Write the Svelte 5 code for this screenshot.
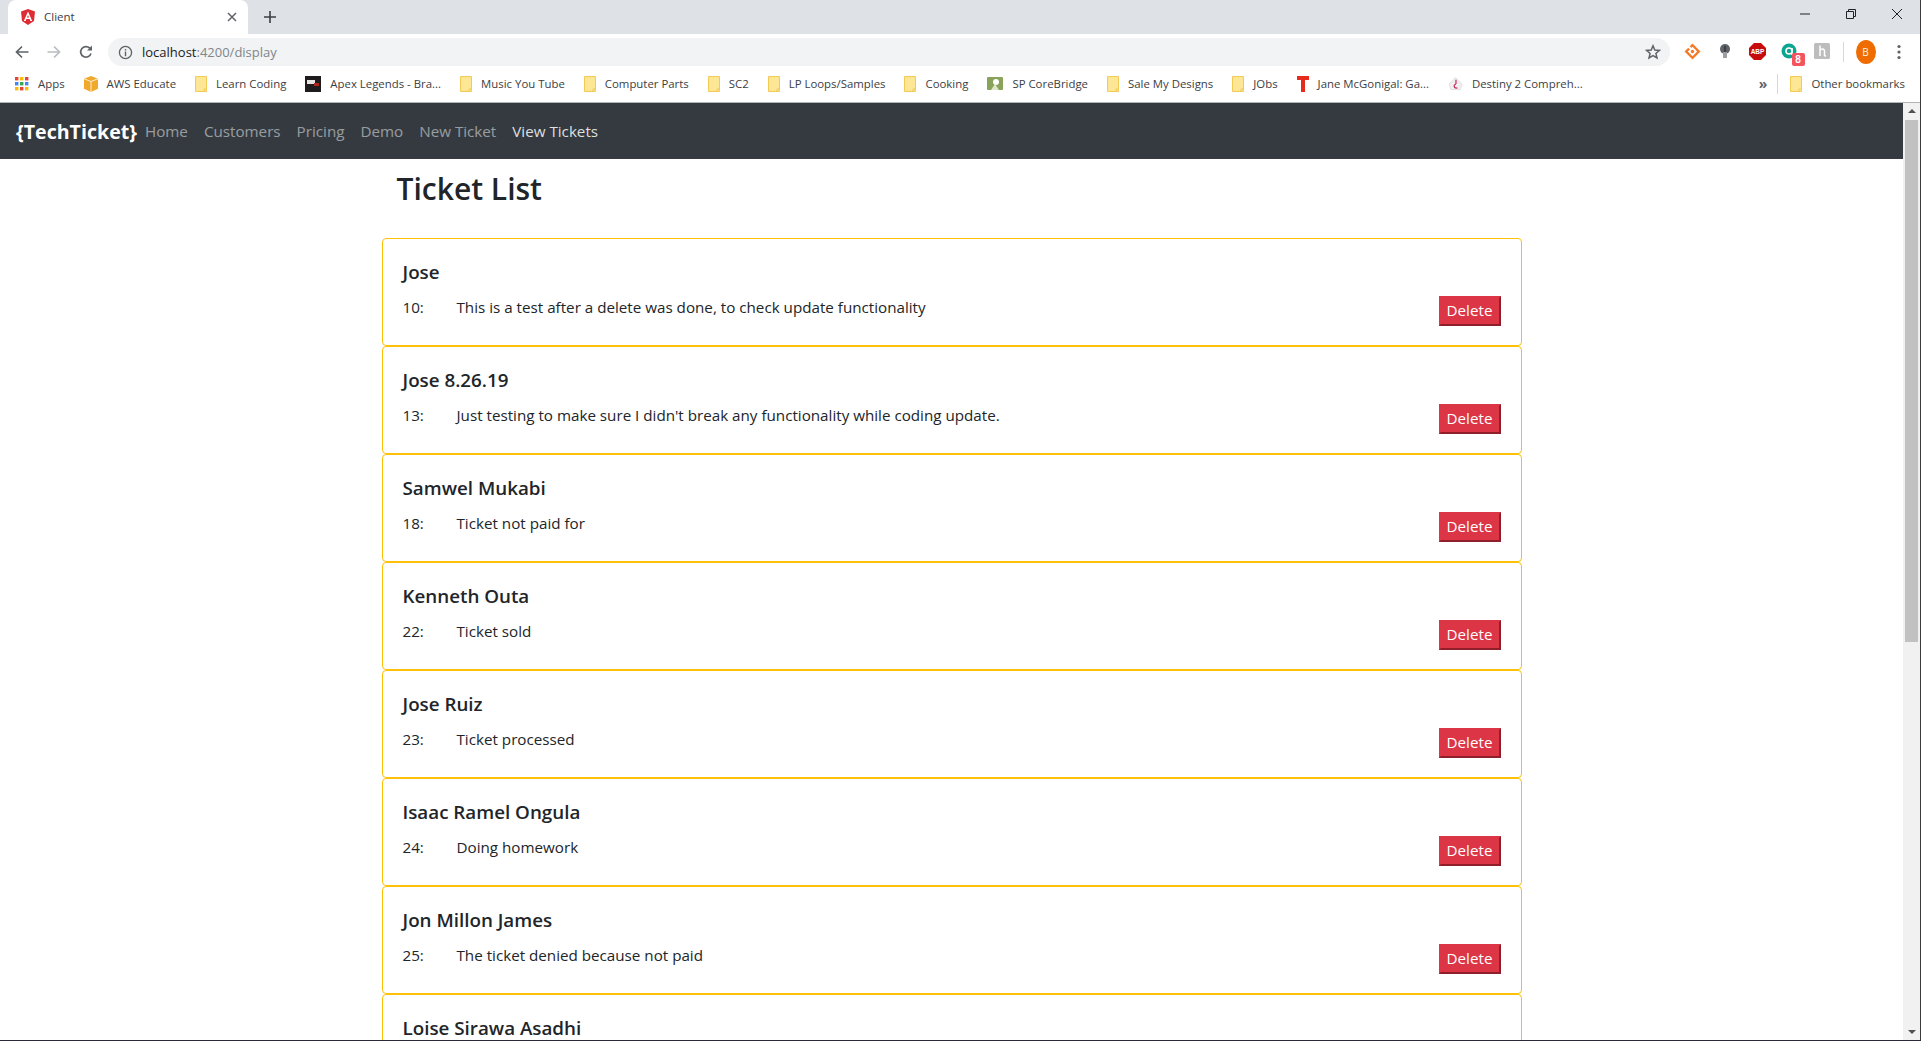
<script>
  const bookmarks = [
    { label: "Apps", icon: "apps" },
    { label: "AWS Educate", icon: "aws" },
    { label: "Learn Coding", icon: "folder" },
    { label: "Apex Legends - Bra...", icon: "apex" },
    { label: "Music You Tube", icon: "folder" },
    { label: "Computer Parts", icon: "folder" },
    { label: "SC2", icon: "folder" },
    { label: "LP Loops/Samples", icon: "folder" },
    { label: "Cooking", icon: "folder" },
    { label: "SP CoreBridge", icon: "sp" },
    { label: "Sale My Designs", icon: "folder" },
    { label: "JObs", icon: "folder" },
    { label: "Jane McGonigal: Ga...", icon: "tee" },
    { label: "Destiny 2 Compreh...", icon: "destiny" },
  ];

  const links = ["Home", "Customers", "Pricing", "Demo", "New Ticket"];

  const tickets = [
    { name: "Jose", id: 10, text: "This is a test after a delete was done, to check update functionality" },
    { name: "Jose 8.26.19", id: 13, text: "Just testing to make sure I didn't break any functionality while coding update." },
    { name: "Samwel Mukabi", id: 18, text: "Ticket not paid for" },
    { name: "Kenneth Outa", id: 22, text: "Ticket sold" },
    { name: "Jose Ruiz", id: 23, text: "Ticket processed" },
    { name: "Isaac Ramel Ongula", id: 24, text: "Doing homework" },
    { name: "Jon Millon James", id: 25, text: "The ticket denied because not paid" },
    { name: "Loise Sirawa Asadhi" },
  ];
</script>

<div class="window">
  <div class="tabstrip">
    <div class="tab">
      <svg class="favicon" viewBox="0 0 16 16" width="16" height="16">
        <path d="M8 0 L15 2.5 L14 12 L8 16 L2 12 L1 2.5 Z" fill="#dd2c35" />
        <path d="M8 2.5 L3.8 12 H5.6 L6.4 10 H9.6 L10.4 12 H12.2 Z M8 6 L9 8.6 H7 Z" fill="#fff" fill-rule="evenodd" />
      </svg>
      <span class="tab-title">Client</span>
      <svg class="tab-close" viewBox="0 0 10 10" width="10" height="10">
        <path d="M1 1 L9 9 M9 1 L1 9" stroke="#5f6368" stroke-width="1.5" />
      </svg>
    </div>
    <svg class="new-tab" viewBox="0 0 12 12" width="12" height="12">
      <path d="M6 0 V12 M0 6 H12" stroke="#3c4043" stroke-width="1.6" />
    </svg>
    <div class="win-controls">
      <svg viewBox="0 0 10 10" width="10" height="10"><path d="M0 5 H10" stroke="#222" /></svg>
      <svg viewBox="0 0 10 10" width="10" height="10"><path d="M.5 2.5 H7.5 V9.5 H.5 Z M2.5 2.5 V.5 H9.5 V7.5 H7.5" fill="none" stroke="#222" /></svg>
      <svg viewBox="0 0 10 10" width="10" height="10"><path d="M0 0 L10 10 M10 0 L0 10" stroke="#222" /></svg>
    </div>
  </div>

  <div class="toolbar">
    <button class="tool" aria-label="Back">
      <svg viewBox="0 0 16 16" width="16" height="16"><path d="M14.5 8 H2.5 M8 2.5 L2.5 8 L8 13.5" fill="none" stroke="#5f6368" stroke-width="1.7" /></svg>
    </button>
    <button class="tool" aria-label="Forward">
      <svg viewBox="0 0 16 16" width="16" height="16"><path d="M1.5 8 H13.5 M8 2.5 L13.5 8 L8 13.5" fill="none" stroke="#b9bcc0" stroke-width="1.7" /></svg>
    </button>
    <button class="tool" aria-label="Reload">
      <svg viewBox="0 0 16 16" width="16" height="16">
        <path d="M13 9.5 A5.3 5.3 0 1 1 11.8 4.2" fill="none" stroke="#5f6368" stroke-width="1.7" />
        <path d="M14 1.5 V6.5 H9 Z" fill="#5f6368" />
      </svg>
    </button>
    <div class="omnibox">
      <svg viewBox="0 0 16 16" width="15" height="15">
        <circle cx="8" cy="8" r="6.5" fill="none" stroke="#5f6368" stroke-width="1.4" />
        <path d="M8 7 V12 M8 4.2 V5.8" stroke="#5f6368" stroke-width="1.5" />
      </svg>
      <span class="url"><span class="host">localhost</span>:4200/display</span>
      <svg class="star" viewBox="0 0 16 16" width="16" height="16">
        <path d="M8 1.8 L9.8 6 L14.4 6.4 L10.9 9.4 L12 13.9 L8 11.5 L4 13.9 L5.1 9.4 L1.6 6.4 L6.2 6 Z" fill="none" stroke="#5f6368" stroke-width="1.5" />
      </svg>
    </div>
    <div class="extensions">
      <span class="ext">
        <svg viewBox="0 0 16 16" width="17" height="17">
          <path d="M8 .5 L15.5 8 L8 15.5 L.5 8 L4 4.5 L5.6 6 L3.6 8 L8 12.4 L12.4 8 L8 3.6 L6.9 4.7 L5.4 3.1 Z" fill="#f47a27" />
          <circle cx="8" cy="8" r="1.6" fill="#f47a27" />
        </svg>
      </span>
      <span class="ext">
        <svg viewBox="0 0 16 16" width="16" height="16">
          <circle cx="8" cy="6" r="5" fill="#5f6368" />
          <path d="M6 9 H10 V15 H6 Z" fill="#9b9ea2" />
          <path d="M7.3 3 H8.7 V9 H7.3 Z" fill="#2f3235" />
        </svg>
      </span>
      <span class="ext">
        <svg viewBox="0 0 17 17" width="17" height="17">
          <path d="M5 0 H12 L17 5 V12 L12 17 H5 L0 12 V5 Z" fill="#c70d0c" />
          <text x="8.5" y="11.3" class="abp">ABP</text>
        </svg>
      </span>
      <span class="ext">
        <svg viewBox="0 0 18 18" width="18" height="18">
          <circle cx="8" cy="8" r="7.5" fill="#0aa68f" />
          <circle cx="8" cy="8" r="3" fill="none" stroke="#fff" stroke-width="1.6" />
          <path d="M11 5 V12" stroke="#fff" stroke-width="1.6" />
        </svg>
        <span class="badge">8</span>
      </span>
      <span class="ext">
        <svg viewBox="0 0 16 16" width="16" height="16">
          <rect width="16" height="16" rx="1.5" fill="#bdbdbd" />
          <path d="M6 2.5 V13 M6 7.5 C8 5 10.5 6 10.5 8 V13 M10.5 13 H12" fill="none" stroke="#fff" stroke-width="1.5" />
        </svg>
      </span>
    </div>
    <span class="tool-sep"></span>
    <span class="avatar">B</span>
    <svg class="menu" viewBox="0 0 4 16" width="4" height="16">
      <circle cx="2" cy="2.5" r="1.6" fill="#5f6368" />
      <circle cx="2" cy="8" r="1.6" fill="#5f6368" />
      <circle cx="2" cy="13.5" r="1.6" fill="#5f6368" />
    </svg>
  </div>

  <div class="bookmarks">
    {#each bookmarks as b}
      <span class="bookmark">
        {#if b.icon === "apps"}
          <svg viewBox="0 0 14 14" width="14" height="14">
            {#each [0, 5, 10] as y, r}
              {#each [0, 5, 10] as x, c}
                <rect {x} {y} width="3.4" height="3.4" fill={["#ea4335", "#4285f4", "#fbbc05", "#34a853"][(r + c * 2) % 4]} />
              {/each}
            {/each}
          </svg>
        {:else if b.icon === "aws"}
          <svg viewBox="0 0 14 16" width="14" height="16">
            <path d="M7 0 L14 2.8 V12.8 L7 16 L0 12.8 V2.8 Z" fill="#f0a92a" />
            <path d="M7 5.5 V16 M0 2.8 L7 5.5 L14 2.8" fill="none" stroke="#fff" stroke-width=".8" />
          </svg>
        {:else if b.icon === "folder"}
          <svg viewBox="0 0 12 16" width="12" height="16">
            <path d="M.5 .5 H11.5 V15.5 H.5 Z" fill="#fde694" stroke="#f3ca56" />
            <path d="M9 15.5 V13 H11.5" fill="none" stroke="#f3ca56" />
          </svg>
        {:else if b.icon === "apex"}
          <svg viewBox="0 0 16 16" width="16" height="16">
            <rect width="16" height="16" fill="#201c1e" />
            <rect x="2" y="4" width="8" height="4" fill="#e8e4e4" />
            <rect x="9" y="7" width="5" height="3" fill="#b3261e" />
          </svg>
        {:else if b.icon === "sp"}
          <svg viewBox="0 0 16 16" width="16" height="16">
            <rect y="1" width="16" height="13" rx="1" fill="#8aa35a" />
            <circle cx="9" cy="6" r="3" fill="#fff" />
            <path d="M4 14 L8 8 L12 14 Z" fill="#dfe8c9" />
          </svg>
        {:else if b.icon === "tee"}
          <svg viewBox="0 0 12 16" width="12" height="16">
            <path d="M0 0 H12 V4 H8 V16 H4 V4 H0 Z" fill="#e62b1e" />
          </svg>
        {:else if b.icon === "destiny"}
          <svg viewBox="0 0 16 16" width="15" height="16">
            <path d="M8 1 L15 8 L13 14 H3 L1 8 Z" fill="#f1eeee" stroke="#d6d3d3" stroke-width=".6" />
            <path d="M8.5 3.5 V8 M10 12 A2.2 2.2 0 1 1 8.5 8" fill="none" stroke="#c2185b" stroke-width="1.2" />
          </svg>
        {/if}
        <span>{b.label}</span>
      </span>
    {/each}
    <span class="more">»</span>
    <span class="bm-sep"></span>
    <span class="bookmark other">
      <svg viewBox="0 0 12 16" width="12" height="16">
        <path d="M.5 .5 H11.5 V15.5 H.5 Z" fill="#fde694" stroke="#f3ca56" />
        <path d="M9 15.5 V13 H11.5" fill="none" stroke="#f3ca56" />
      </svg>
      <span>Other bookmarks</span>
    </span>
  </div>

  <div class="viewport">
    <div class="page">
      <nav class="navbar">
        <span class="brand">{"{TechTicket}"}</span>
        {#each links as link}
          <span class="nav-link">{link}</span>
        {/each}
        <span class="nav-link active">View Tickets</span>
      </nav>

      <main class="container">
        <h2>Ticket List</h2>
        <div class="list">
          {#each tickets as t}
            <section class="card">
              <h5>{t.name}</h5>
              {#if t.text}
                <div class="row">
                  <div class="info">
                    <span class="num">{t.id}:</span>
                    <span>{t.text}</span>
                  </div>
                  <button class="delete">Delete</button>
                </div>
              {/if}
            </section>
          {/each}
        </div>
      </main>
    </div>

    <div class="scrollbar">
      <span class="arrow up"></span>
      <span class="thumb"></span>
      <span class="arrow down"></span>
    </div>
  </div>
</div>

<style>
  :global(body) {
    margin: 0;
    overflow: hidden;
    background: #fff;
  }

  .window {
    height: 1041px;
    display: flex;
    flex-direction: column;
    overflow: hidden;
    font-family: "Open Sans", sans-serif;
    border-right: 1px solid #3c3c3c;
    border-bottom: 1px solid #2b2b3a;
    box-sizing: border-box;
  }

  .tabstrip {
    flex: 0 0 34px;
    display: flex;
    align-items: center;
    padding-left: 8px;
    background: #dee1e6;
  }

  .tab {
    width: 240px;
    height: 34px;
    box-sizing: border-box;
    display: flex;
    align-items: center;
    padding: 0 11px 1px 12px;
    background: #fff;
    border-radius: 8px 8px 0 0;
  }

  .tab-title {
    margin-left: 8px;
    flex: 1;
    font-size: 11.5px;
    color: #3c4043;
  }

  .new-tab {
    margin-left: 16px;
  }

  .win-controls {
    margin-left: auto;
    align-self: flex-start;
    display: flex;
    gap: 36px;
    padding: 9px 18px 0 0;
  }

  .toolbar {
    flex: 0 0 34px;
    display: flex;
    align-items: center;
    padding: 2px 0 0 6px;
    box-sizing: border-box;
    background: #fff;
  }

  .tool {
    width: 32px;
    height: 28px;
    padding: 0;
    border: 0;
    background: none;
    display: flex;
    align-items: center;
    justify-content: center;
  }

  .omnibox {
    width: 1562px;
    height: 28px;
    margin-left: 6px;
    padding: 0 9px 0 10px;
    box-sizing: border-box;
    display: flex;
    align-items: center;
    gap: 9px;
    background: #f1f3f4;
    border-radius: 14px;
    font-size: 13px;
  }

  .url {
    flex: 1;
    color: #80868b;
  }

  .host {
    color: #202124;
  }

  .extensions {
    display: flex;
    margin-left: 6px;
  }

  .ext {
    position: relative;
    width: 32.5px;
    display: flex;
    justify-content: center;
  }

  .abp {
    font-family: "Liberation Sans", sans-serif;
    font-size: 6.5px;
    font-weight: 700;
    fill: #fff;
    text-anchor: middle;
  }

  .badge {
    position: absolute;
    left: 18px;
    top: 10px;
    width: 13px;
    height: 13px;
    border-radius: 2px;
    background: #f4545e;
    color: #fff;
    font: 700 10px/13px "Liberation Sans", sans-serif;
    text-align: center;
  }

  .tool-sep {
    width: 1px;
    height: 20px;
    margin-left: 4px;
    background: #d5d7da;
  }

  .avatar {
    width: 20px;
    height: 24px;
    margin-left: 12px;
    border-radius: 50%;
    background: #ef6c00;
    color: #fff3e0;
    font-size: 10px;
    line-height: 24px;
    text-align: center;
  }

  .menu {
    margin-left: 21px;
  }

  .bookmarks {
    flex: 0 0 31px;
    display: flex;
    align-items: center;
    gap: 19px;
    padding: 0 0 3px 15px;
    background: #fff;
    border-bottom: 1px solid #b4b4b4;
    font-size: 11.4px;
    color: #3c4043;
    white-space: nowrap;
  }

  .bookmark {
    display: flex;
    align-items: center;
    gap: 9px;
  }

  .more {
    margin-left: auto;
    font-size: 14px;
    font-weight: 700;
    color: #5f6368;
  }

  .bm-sep {
    width: 1px;
    height: 20px;
    margin-left: -9px;
    background: #d5d7da;
  }

  .other {
    margin-left: -7px;
    padding-right: 15px;
  }

  .viewport {
    flex: 1;
    min-height: 0;
    display: flex;
  }

  .page {
    flex: 1;
    min-width: 0;
    overflow: hidden;
    color: #212529;
  }

  .navbar {
    height: 56px;
    display: flex;
    align-items: center;
    padding-left: 16px;
    background: #343a40;
    font-size: 15.2px;
  }

  .brand {
    font-size: 19.6px;
    font-weight: 700;
    color: #fff;
    padding-right: 8px;
  }

  .nav-link {
    margin-right: 16px;
    color: rgba(255, 255, 255, 0.5);
  }

  .nav-link.active {
    color: rgba(255, 255, 255, 0.85);
  }

  .container {
    width: 1140px;
    margin: 0 auto;
  }

  h2 {
    margin: 0;
    padding: 11px 14px 30px 15px;
    font-size: 30px;
    line-height: 38px;
    font-weight: 600;
  }

  .list {
    display: flex;
    flex-direction: column;
  }

  .card {
    height: 108px;
    box-sizing: border-box;
    padding: 21px 20px 0;
    border: 1px solid #ffc107;
    border-radius: 4px;
    color: #212529;
  }

  h5 {
    margin: 0;
    font-size: 18.8px;
    line-height: 24px;
    font-weight: 600;
  }

  .row {
    display: flex;
    justify-content: space-between;
  }

  .info {
    display: flex;
    padding-top: 11px;
    font-size: 15.2px;
    line-height: 24px;
  }

  .num {
    width: 54px;
  }

  .delete {
    width: 62px;
    height: 30px;
    margin-top: 12px;
    padding: 0;
    background: #dc3545;
    color: #fff;
    border: 2px solid;
    border-color: #dc3545 #8f1f2b #8f1f2b #dc3545;
    font: inherit;
    font-size: 15.2px;
    line-height: 1;
  }

  .scrollbar {
    flex: 0 0 17px;
    display: flex;
    flex-direction: column;
    align-items: center;
    background: #f1f1f1;
  }

  .thumb {
    width: 13px;
    height: 522px;
    background: #c1c1c1;
  }

  .arrow {
    width: 0;
    height: 0;
    border-left: 4px solid transparent;
    border-right: 4px solid transparent;
  }

  .arrow.up {
    margin: 6px 0 7px;
    border-bottom: 4px solid #505050;
  }

  .arrow.down {
    margin-top: auto;
    margin-bottom: 6px;
    border-top: 4px solid #505050;
  }
</style>
